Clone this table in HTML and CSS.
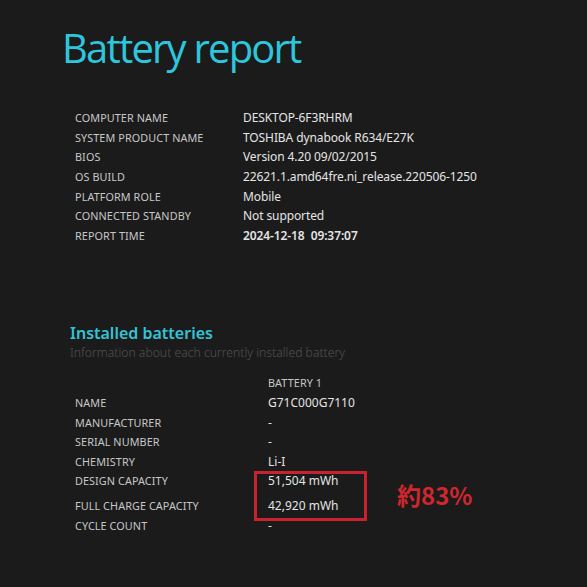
FILE: index.html
```html
<!DOCTYPE html>
<html>
<head>
<meta charset="utf-8">
<link rel="stylesheet" href="styles.css">
</head>
<body>
<div class="page">
  <h1 class="title">Battery report</h1>
  <table class="info">
    <tr><td class="label">COMPUTER NAME</td><td class="value">DESKTOP-6F3RHRM</td></tr>
    <tr><td class="label">SYSTEM PRODUCT NAME</td><td class="value">TOSHIBA dynabook R634/E27K</td></tr>
    <tr><td class="label">BIOS</td><td class="value">Version 4.20 09/02/2015</td></tr>
    <tr><td class="label">OS BUILD</td><td class="value">22621.1.amd64fre.ni_release.220506-1250</td></tr>
    <tr><td class="label">PLATFORM ROLE</td><td class="value">Mobile</td></tr>
    <tr><td class="label">CONNECTED STANDBY</td><td class="value">Not supported</td></tr>
    <tr><td class="label">REPORT TIME</td><td class="value strong">2024-12-18&nbsp; 09:37:07</td></tr>
  </table>

  <h2 class="section">Installed batteries</h2>
  <div class="subtitle">Information about each currently installed battery</div>

  <div class="batteries">
    <div class="bat-table">
      <div class="brow head"><span class="label"></span><span class="label">BATTERY 1</span></div>
      <div class="brow"><span class="label">NAME</span><span class="value">G71C000G7110</span></div>
      <div class="brow"><span class="label">MANUFACTURER</span><span class="value">-</span></div>
      <div class="brow"><span class="label">SERIAL NUMBER</span><span class="value">-</span></div>
      <div class="brow"><span class="label">CHEMISTRY</span><span class="value">Li-I</span></div>
      <div class="brow"><span class="label">DESIGN CAPACITY</span><span class="value">51,504 mWh</span></div>
      <div class="brow spaced"><span class="label">FULL CHARGE CAPACITY</span><span class="value">42,920 mWh</span></div>
      <div class="brow"><span class="label">CYCLE COUNT</span><span class="value">-</span></div>
      <div class="highlight"></div>
      <div class="note">約83%</div>
    </div>
  </div>
</div>
</body>
</html>
```

FILE: styles.css
```css
html, body {
  margin: 0;
  padding: 0;
  background: #1b1b1b;
}
body {
  width: 587px;
  height: 587px;
  overflow: hidden;
  font-family: "Noto Sans", "Open Sans", sans-serif;
}
.page {
  padding: 16px 0 0 64px;
}
.title {
  margin: 0 0 0 -2px;
  font-family: "Open Sans", "Noto Sans", sans-serif;
  font-stretch: 92%;
  font-size: 40px;
  font-weight: 400;
  line-height: 64px;
  color: #2ec6dc;
  letter-spacing: -1.8px;
}
.info {
  margin: 28px 0 0 11px;
  border-collapse: collapse;
}
.info td {
  padding: 0;
  height: 19.6px;
  vertical-align: middle;
}
.info .label {
  width: 168px;
}
.label {
  font-size: 10.8px;
  color: #c8c8c8;
  letter-spacing: 0.1px;
}
.value {
  font-size: 12px;
  color: #e4e4e4;
}
.info .value {
  letter-spacing: -0.1px;
}
.strong {
  font-weight: 600;
}
.section {
  margin: 78px 0 0 6px;
  font-size: 16px;
  font-weight: 600;
  line-height: 20px;
  color: #35c3d4;
}
.subtitle {
  margin: 0 0 0 6px;
  font-size: 12.2px;
  font-weight: 300;
  line-height: 19px;
  color: #525252;
}
.batteries {
  margin: 11px 0 0 11px;
}
.bat-table {
  position: relative;
  width: 420px;
}
.brow {
  display: flex;
  align-items: center;
  height: 19.6px;
}
.brow.spaced {
  margin-top: 5px;
}
.brow .label:first-child {
  width: 193px;
}
.highlight {
  position: absolute;
  left: 179px;
  top: 98px;
  width: 107px;
  height: 44px;
  border: 3px solid #c8232c;
}
.note {
  position: absolute;
  left: 322px;
  top: 107px;
  font-family: "Noto Sans CJK JP", sans-serif;
  font-size: 24px;
  font-weight: 700;
  color: #d0262e;
  line-height: 30px;
}
```
